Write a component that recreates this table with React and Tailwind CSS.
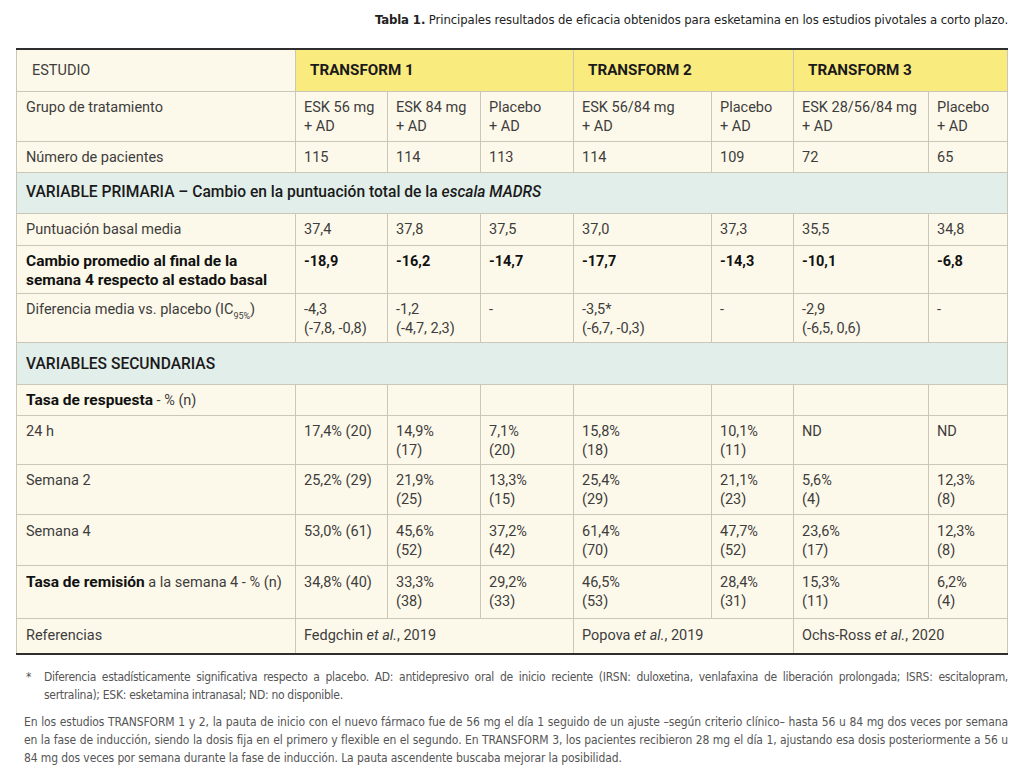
import React from "react";

const BODY = { fontFamily: "Roboto, 'Noto Sans', sans-serif" };
const COND = { fontFamily: "'Liberation Sans Narrow', 'DejaVu Sans Condensed', 'Roboto Condensed', 'Liberation Sans', sans-serif" };

const cellB = "border border-[#cbc7b8] align-top px-[8px] pt-[6px] text-[14.5px] leading-[19px] text-[#3d3d3d] whitespace-pre-line";
const firstB = "border border-[#cbc7b8] align-top pl-[9px] pr-[4px] pt-[6px] text-[14.5px] leading-[19px] text-[#3d3d3d]";

const rows = [
  { h: 50, label: "Grupo de tratamiento", v: ["ESK 56 mg\n+ AD", "ESK 84 mg\n+ AD", "Placebo\n+ AD", "ESK 56/84 mg\n+ AD", "Placebo\n+ AD", "ESK 28/56/84 mg\n+ AD", "Placebo\n+ AD"] },
  { h: 31, label: "Número de pacientes", v: ["115", "114", "113", "114", "109", "72", "65"] },
  { section: true, h: 41, label: <>VARIABLE PRIMARIA – Cambio en la puntuación total de la <i>escala MADRS</i></> },
  { h: 32, label: "Puntuación basal media", v: ["37,4", "37,8", "37,5", "37,0", "37,3", "35,5", "34,8"] },
  { h: 48, bold: true, pt: "pt-[4px]", label: <span className="text-[15.5px]">Cambio promedio al final de la<br />semana 4 respecto al estado basal</span>, v: ["-18,9", "-16,2", "-14,7", "-17,7", "-14,3", "-10,1", "-6,8"] },
  { h: 49, label: <>Diferencia media vs. placebo (IC<sub className="text-[9px] align-[-3px]">95%</sub>)</>, v: ["-4,3\n(-7,8, -0,8)", "-1,2\n(-4,7, 2,3)", "-", "-3,5*\n(-6,7, -0,3)", "-", "-2,9\n(-6,5, 0,6)", "-"] },
  { section: true, h: 42, pt: "pt-[4px]", label: "VARIABLES SECUNDARIAS" },
  { h: 31, label: <><b className="font-bold text-[#111] text-[15.5px]">Tasa de respuesta</b> - % (n)</>, v: ["", "", "", "", "", "", ""] },
  { h: 49, label: "24 h", v: ["17,4% (20)", "14,9%\n(17)", "7,1%\n(20)", "15,8%\n(18)", "10,1%\n(11)", "ND", "ND"] },
  { h: 50, label: "Semana 2", v: ["25,2% (29)", "21,9%\n(25)", "13,3%\n(15)", "25,4%\n(29)", "21,1%\n(23)", "5,6%\n(4)", "12,3%\n(8)"] },
  { h: 51, label: "Semana 4", pt: "pt-[7px]", v: ["53,0% (61)", "45,6%\n(52)", "37,2%\n(42)", "61,4%\n(70)", "47,7%\n(52)", "23,6%\n(17)", "12,3%\n(8)"] },
  { h: 53, pt: "pt-[7px]", label: <><b className="font-bold text-[#111] text-[15.5px]">Tasa de remisión</b> a la semana 4 - % (n)</>, v: ["34,8% (40)", "33,3%\n(38)", "29,2%\n(33)", "46,5%\n(53)", "28,4%\n(31)", "15,3%\n(11)", "6,2%\n(4)"] },
];

export default function App() {
  return (
    <div className="w-[1024px] h-[774px] bg-white px-[16px] overflow-hidden" style={BODY}>
      <div className="pt-[12px] h-[48px] text-right text-[13px] leading-[16px] tracking-[-0.1px] text-[#222]" style={COND}>
        <b className="font-bold">Tabla 1.</b> Principales resultados de eficacia obtenidos para esketamina en los estudios pivotales a corto plazo.
      </div>
      <table className="w-[991px] border-collapse table-fixed border-t-2 border-b-2 border-t-[#2e2e2e] border-b-[#2e2e2e] bg-[#fdf9ea]">
        <colgroup>
          <col className="w-[279px]" />
          <col className="w-[92px]" />
          <col className="w-[93px]" />
          <col className="w-[93px]" />
          <col className="w-[138px]" />
          <col className="w-[82px]" />
          <col className="w-[135px]" />
          <col className="w-[79px]" />
        </colgroup>
        <tbody>
          <tr className="h-[42px]">
            <td className="border-x border-b border-[#cbc7b8] border-t-0 pl-[15px] pt-[2px] text-[14.5px] text-[#3d3d3d] align-middle">ESTUDIO</td>
            <td colSpan={3} className="border-x border-b border-[#cbc7b8] border-t-0 bg-[#faeb7e] pl-[14px] text-[15.2px] font-bold text-[#1a1a1a] align-middle">TRANSFORM 1</td>
            <td colSpan={2} className="border-x border-b border-[#cbc7b8] border-t-0 bg-[#faeb7e] pl-[14px] text-[15.2px] font-bold text-[#1a1a1a] align-middle">TRANSFORM 2</td>
            <td colSpan={2} className="border-x border-b border-[#cbc7b8] border-t-0 bg-[#faeb7e] pl-[14px] text-[15.2px] font-bold text-[#1a1a1a] align-middle">TRANSFORM 3</td>
          </tr>
          {rows.map((r, i) =>
            r.section ? (
              <tr key={i} style={{ height: r.h }}>
                <td colSpan={8} className={`border border-[#cbc7b8] bg-[#e2eeea] pl-[9px] align-middle text-[15.6px] font-medium text-[#1a1a1a] ${r.pt || ""}`}>{r.label}</td>
              </tr>
            ) : (
              <tr key={i} style={{ height: r.h }}>
                <td className={`${firstB} ${r.bold ? "font-bold text-[#111]" : ""} ${r.pt || ""}`}>{r.label}</td>
                {r.v.map((c, j) => (
                  <td key={j} className={`${cellB} ${r.bold ? "font-bold text-[#111]" : ""} ${c === "ND" ? "text-[#1a1a1a]" : ""} ${r.pt || ""}`}>{c}</td>
                ))}
              </tr>
            )
          )}
          <tr className="h-[36px]">
            <td className="border border-[#cbc7b8] border-b-0 pl-[9px] align-middle text-[14.5px] text-[#3d3d3d]">Referencias</td>
            <td colSpan={3} className="border border-[#cbc7b8] border-b-0 px-[8px] align-middle text-[14.5px] text-[#3d3d3d]">Fedgchin <i>et al.</i>, 2019</td>
            <td colSpan={2} className="border border-[#cbc7b8] border-b-0 px-[8px] align-middle text-[14.5px] text-[#3d3d3d]">Popova <i>et al.</i>, 2019</td>
            <td colSpan={2} className="border border-[#cbc7b8] border-b-0 px-[8px] align-middle text-[14.5px] text-[#3d3d3d]">Ochs-Ross <i>et al.</i>, 2020</td>
          </tr>
        </tbody>
      </table>
      <div className="pt-[13px] text-[12px] leading-[18px] text-[#555] text-justify" style={COND}>
        <div className="flex tracking-[-0.3px]">
          <span className="w-[18px] shrink-0 pl-[10px]">*</span>
          <p className="pl-[10px]">Diferencia estadísticamente significativa respecto a placebo. AD: antidepresivo oral de inicio reciente (IRSN: duloxetina, venlafaxina de liberación prolongada; ISRS: escitalopram, sertralina); ESK: esketamina intranasal; ND: no disponible.</p>
        </div>
        <p className="mt-[9px] pl-[8px] tracking-[-0.11px]">En los estudios TRANSFORM 1 y 2, la pauta de inicio con el nuevo fármaco fue de 56 mg el día 1 seguido de un ajuste –según criterio clínico– hasta 56 u 84 mg dos veces por semana en la fase de inducción, siendo la dosis fija en el primero y flexible en el segundo. En TRANSFORM 3, los pacientes recibieron 28 mg el día 1, ajustando esa dosis posteriormente a 56 u 84 mg dos veces por semana durante la fase de inducción. La pauta ascendente buscaba mejorar la posibilidad.</p>
      </div>
    </div>
  );
}
